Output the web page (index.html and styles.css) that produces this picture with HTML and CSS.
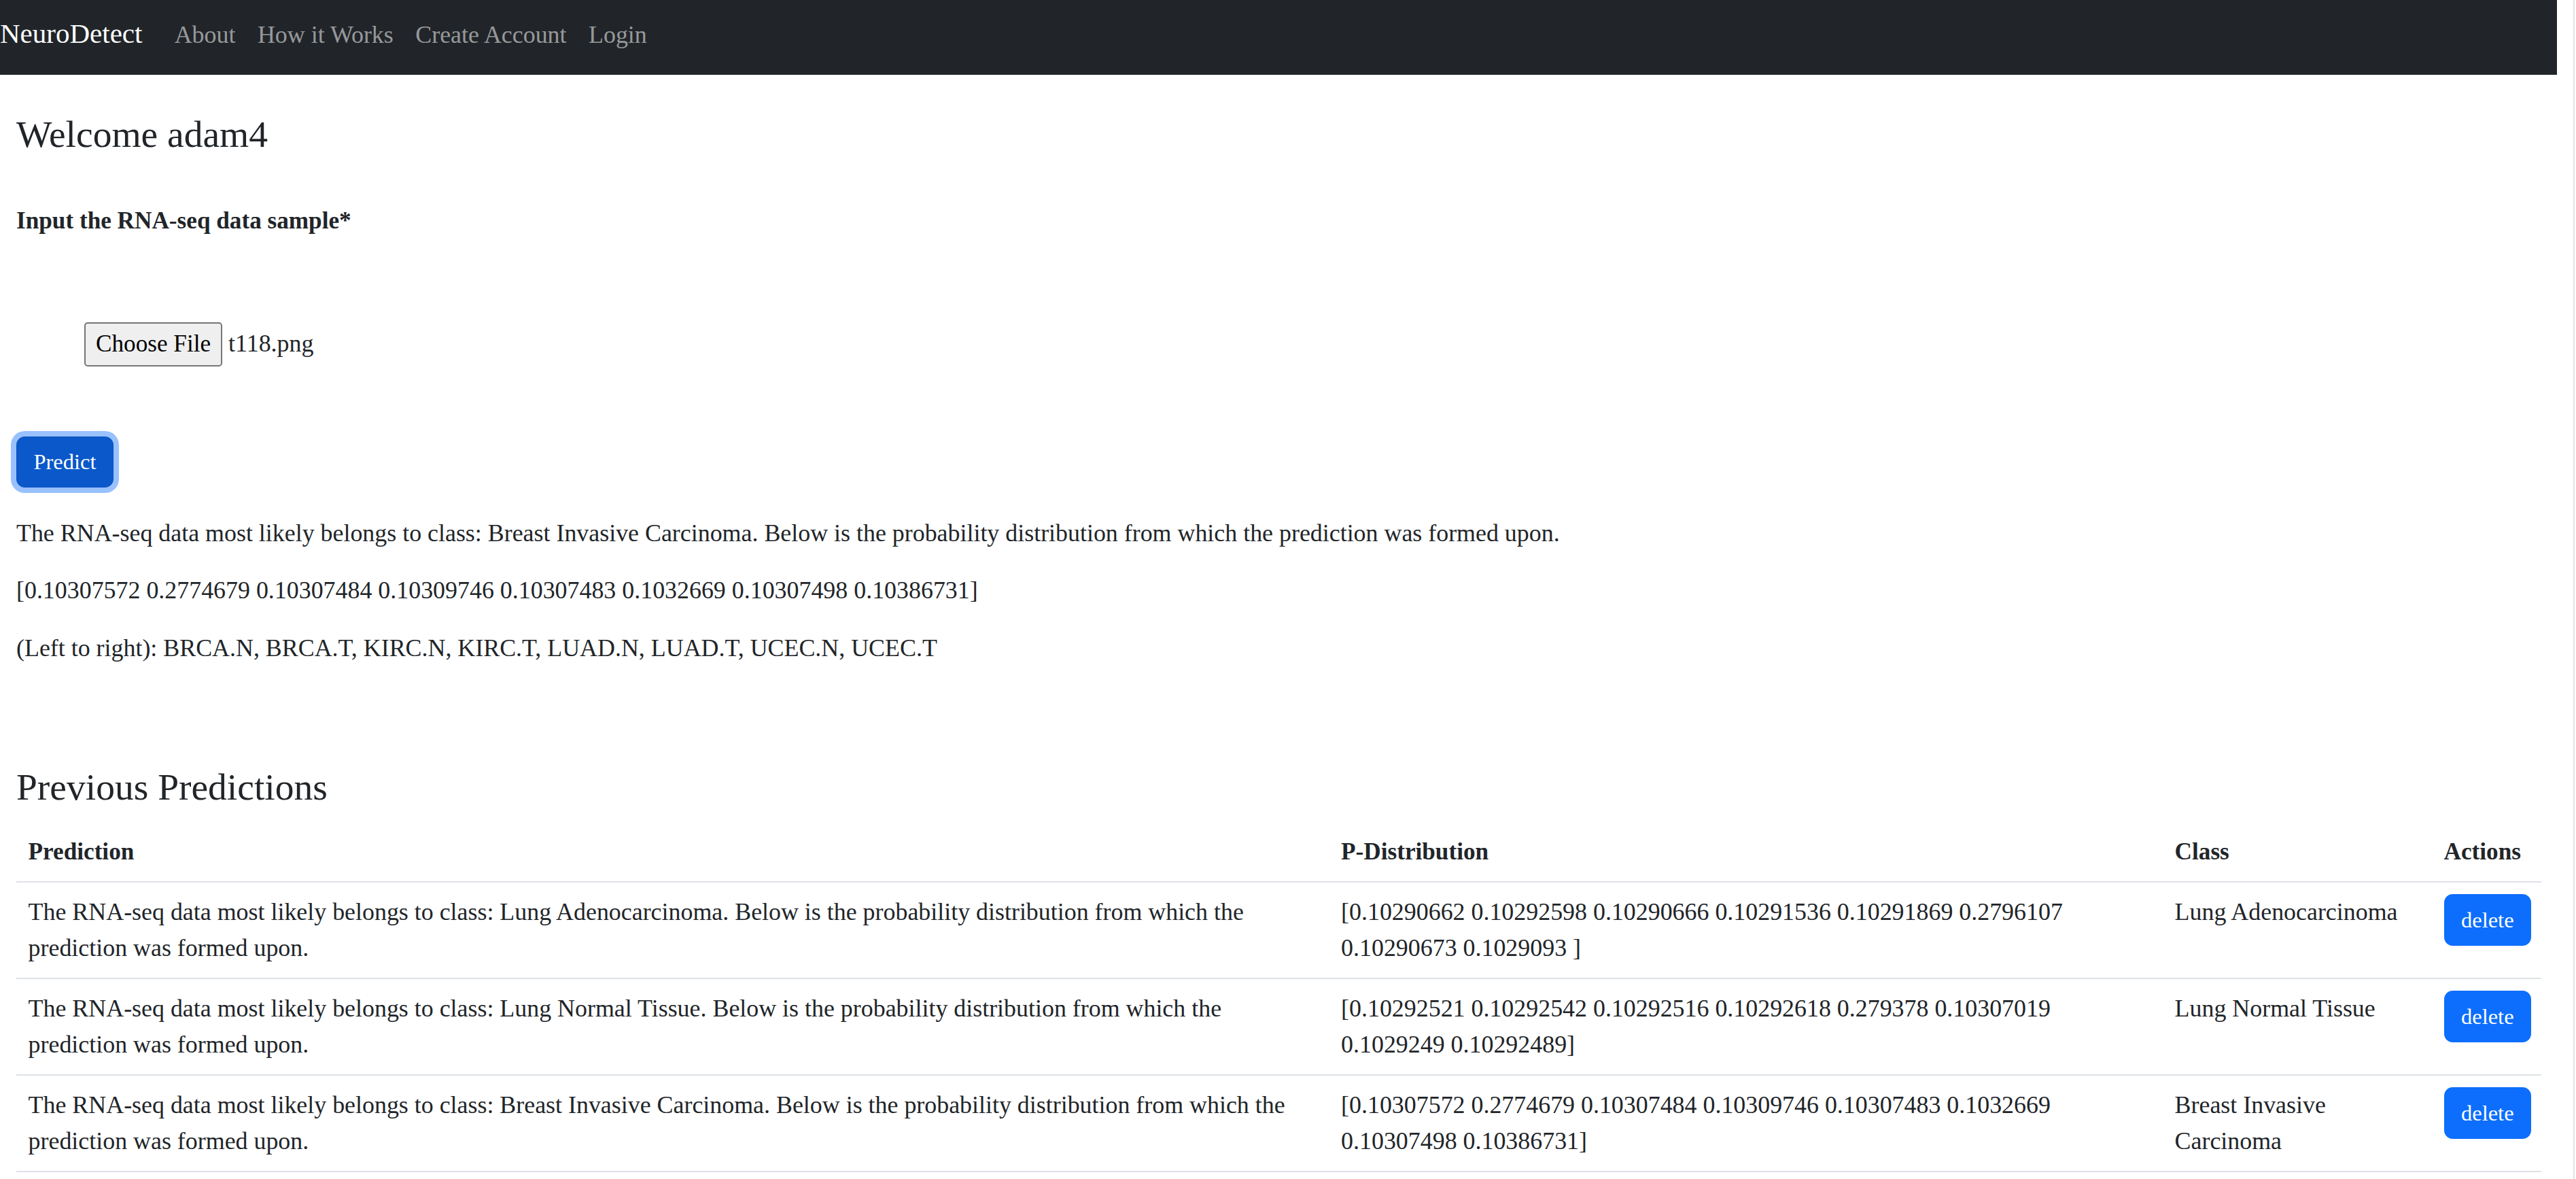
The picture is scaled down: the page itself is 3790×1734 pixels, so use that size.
FILE: index.html
```html
<!DOCTYPE html>
<html lang="en">
<head>
<meta charset="utf-8">
<title>NeuroDetect</title>
<link rel="stylesheet" href="styles.css">
</head>
<body>
<div class="viewport">
  <div class="page">
    <nav class="navbar">
      <a class="brand" href="#">NeuroDetect</a>
      <a class="nav-link" href="#">About</a>
      <a class="nav-link" href="#">How it Works</a>
      <a class="nav-link" href="#">Create Account</a>
      <a class="nav-link" href="#">Login</a>
    </nav>
    <main class="container">
      <h3 class="welcome">Welcome adam4</h3>
      <form class="upload-form">
        <label class="form-label">Input the RNA-seq data sample*</label>
        <div class="file-row">
          <button type="button" class="file-btn">Choose File</button>
          <span class="file-name">t118.png</span>
        </div>
        <div class="submit-row">
          <button type="button" class="btn btn-focus">Predict</button>
        </div>
      </form>
      <div class="result">
        <p>The RNA-seq data most likely belongs to class: Breast Invasive Carcinoma. Below is the probability distribution from which the prediction was formed upon.</p>
        <p>[0.10307572 0.2774679 0.10307484 0.10309746 0.10307483 0.1032669 0.10307498 0.10386731]</p>
        <p>(Left to right): BRCA.N, BRCA.T, KIRC.N, KIRC.T, LUAD.N, LUAD.T, UCEC.N, UCEC.T</p>
      </div>
      <h3 class="section-title">Previous Predictions</h3>
      <table class="table">
        <thead>
          <tr>
            <th class="col-pred">Prediction</th>
            <th class="col-dist">P-Distribution</th>
            <th class="col-class">Class</th>
            <th class="col-actions">Actions</th>
          </tr>
        </thead>
        <tbody>
          <tr>
            <td>The RNA-seq data most likely belongs to class: Lung Adenocarcinoma. Below is the probability distribution from which the prediction was formed upon.</td>
            <td>[0.10290662 0.10292598 0.10290666 0.10291536 0.10291869 0.2796107 0.10290673 0.1029093 ]</td>
            <td>Lung Adenocarcinoma</td>
            <td><button type="button" class="btn">delete</button></td>
          </tr>
          <tr>
            <td>The RNA-seq data most likely belongs to class: Lung Normal Tissue. Below is the probability distribution from which the prediction was formed upon.</td>
            <td>[0.10292521 0.10292542 0.10292516 0.10292618 0.279378 0.10307019 0.1029249 0.10292489]</td>
            <td>Lung Normal Tissue</td>
            <td><button type="button" class="btn">delete</button></td>
          </tr>
          <tr>
            <td>The RNA-seq data most likely belongs to class: Breast Invasive Carcinoma. Below is the probability distribution from which the prediction was formed upon.</td>
            <td>[0.10307572 0.2774679 0.10307484 0.10309746 0.10307483 0.1032669 0.10307498 0.10386731]</td>
            <td>Breast Invasive Carcinoma</td>
            <td><button type="button" class="btn">delete</button></td>
          </tr>
        </tbody>
      </table>
    </main>
  </div>
  <div class="scroll-track"></div>
</div>
</body>
</html>
```

FILE: styles.css
```css
html {
  overflow: hidden;
}

body {
  margin: 0;
  background: #fff;
  color: #212529;
  font-family: "Liberation Serif", "Times New Roman", serif;
  font-size: 35.9px;
  line-height: 52.8px;
}

.viewport {
  display: flex;
  min-height: 100vh;
}

.page {
  flex: 1;
  min-width: 0;
}

.scroll-track {
  width: 24px;
  margin-right: 2px;
  border-right: 2px solid #e3e3e3;
  background: #fff;
}

/* Navbar */
.navbar {
  box-sizing: border-box;
  height: 110px;
  padding-top: 23px;
  background: #212529;
  display: flex;
  align-items: baseline;
}

.brand {
  color: #fff;
  text-decoration: none;
  font-size: 41px;
  line-height: 52.8px;
  margin-right: 31px;
}

.nav-link {
  color: rgba(255, 255, 255, 0.55);
  text-decoration: none;
  font-size: 35.9px;
  line-height: 52.8px;
  padding: 0 16.25px;
}

/* Main content */
.container {
  padding: 0 24px;
}

.welcome,
.section-title {
  font-size: 55.5px;
  line-height: 66px;
  font-weight: 400;
  margin: 0;
}

.welcome {
  margin-top: 55px;
}

.upload-form {
  margin: 0;
}

.form-label {
  display: block;
  margin-top: 68px;
  font-weight: 700;
  font-size: 35.2px;
}

.file-row {
  display: flex;
  align-items: baseline;
  margin: 122px 0 0 100px;
}

.file-btn {
  box-sizing: border-box;
  height: 65px;
  padding: 10.5px 15px;
  border: 2px solid #767676;
  border-radius: 5px;
  background: #efefef;
  color: #000;
  font-family: inherit;
  font-size: 35.2px;
  line-height: 40px;
}

.file-name {
  margin-left: 9px;
}

.submit-row {
  display: flex;
  margin-top: 103px;
}

.btn {
  display: inline-block;
  box-sizing: border-box;
  padding: 12.19px 24.38px;
  border: 1px solid #0d6efd;
  border-radius: 12.2px;
  background: #0d6efd;
  color: #fff;
  font-family: inherit;
  font-size: 32.5px;
  line-height: 48.75px;
  cursor: pointer;
}

.btn-focus {
  background: #0a58ca;
  border-color: #0a53be;
  box-shadow: 0 0 0 8px rgba(49, 132, 253, 0.5);
}

.result {
  margin-top: 40.7px;
}

.result p {
  margin: 0 0 31.7px;
}

.section-title {
  margin-top: 146px;
  margin-bottom: 18px;
}

/* Table */
.table {
  width: 100%;
  table-layout: fixed;
  border-collapse: collapse;
  margin: 0;
  line-height: 53px;
}

.table th,
.table td {
  box-sizing: border-box;
  padding: 17px 17.6px;
  text-align: left;
  vertical-align: top;
  border-bottom: 2px solid #dee2e6;
}

.table th {
  font-weight: 700;
  font-size: 35.2px;
}

.col-pred {
  width: 1931.5px;
}

.col-dist {
  width: 1226.5px;
}

.col-class {
  width: 396px;
}

.col-actions {
  width: 161px;
}
```
